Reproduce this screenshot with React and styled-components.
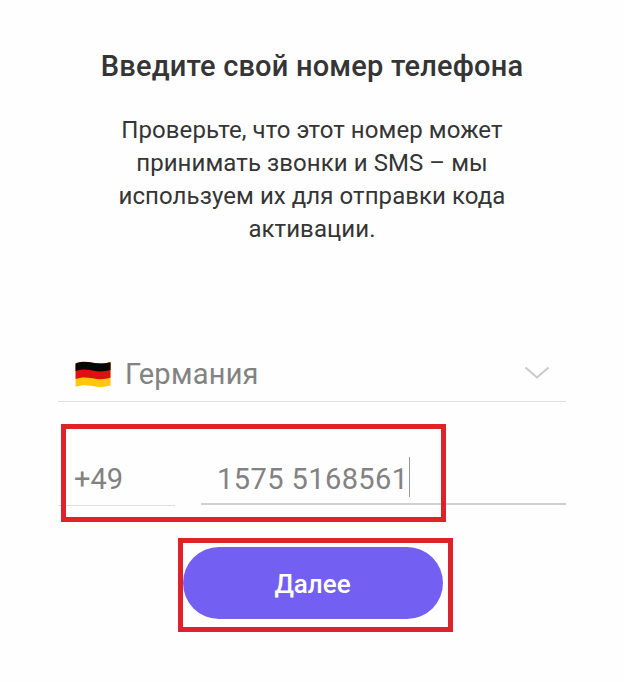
import React from 'react'
import styled, { createGlobalStyle } from 'styled-components'

const dark = '#353535'
const grey = '#828282'
const purple = '#7360f2'
const red = '#de222a'

const GlobalStyle = createGlobalStyle`
  * {
    box-sizing: border-box;
  }
  body {
    margin: 0;
    background: #fefefe;
    font-family: Roboto, sans-serif;
  }
`

const App = () => (
  <Page>
    <GlobalStyle />
    <Title>Введите свой номер телефона</Title>
    <Description>
      <Line>Проверьте, что этот номер может</Line>
      <Line>принимать звонки и SMS – мы</Line>
      <Line>используем их для отправки кода</Line>
      <Line>активации.</Line>
    </Description>
    <Form>
      <CountrySelect>
        <Flag />
        <CountryName>Германия</CountryName>
        <Chevron />
      </CountrySelect>
      <PhoneRow>
        <CodeField>+49</CodeField>
        <NumberField>
          <Digits>1575 5168561</Digits>
          <Caret />
        </NumberField>
        <PhoneHighlight />
      </PhoneRow>
    </Form>
    <ButtonWrap>
      <Button type="button">Далее</Button>
      <ButtonHighlight />
    </ButtonWrap>
  </Page>
)

const Flag = () => (
  <FlagSvg viewBox="0 0 36 26">
    <defs>
      <clipPath id="wave">
        <path d="M.6 1.9C6-.1 11-.1 17.500 1.300C24 2.600 29 2.300 35.500 .7V24C29 25.700 24 25.800 17.500 24.500C11 23.300 6 23.400.6 25.300Z" />
      </clipPath>
    </defs>
    <g clipPath="url(#wave)">
      <rect width="36" height="26" fill="#ffc90a" />
      <path d="M0-2H36V16.100C29 18.200 24 18.100 17.500 16.800C11 15.500 6 15.500 0 17.500Z" fill="#dc1212" />
      <path d="M0-2H36V8.300C29 10.400 24 10.300 17.500 9C11 7.700 6 7.700 0 9.700Z" fill="#090606" />
    </g>
  </FlagSvg>
)

const Chevron = () => (
  <ChevronSvg viewBox="0 0 26 14">
    <path d="M1.500 1.500L13 11.500L24.500 1.500" />
  </ChevronSvg>
)

export default App

const Page = styled.main`
  width: 624px;
  height: 682px;
  padding-top: 46px;
  overflow: hidden;
`

const Title = styled.h1`
  margin: 0;
  color: ${dark};
  font-size: 29px;
  font-weight: 500;
  line-height: 40px;
  letter-spacing: 0.19px;
  text-align: center;
  white-space: nowrap;
`

const Description = styled.p`
  margin: 28px 0 0;
  color: ${dark};
  font-size: 24px;
  line-height: 33px;
  letter-spacing: 0.07px;
  text-align: center;
`

const Line = styled.span`
  display: block;
  white-space: nowrap;
`

const Form = styled.div`
  width: 508px;
  margin: 99px 0 0 58px;
`

const CountrySelect = styled.div`
  display: flex;
  align-items: center;
  height: 57px;
  padding: 2px 16px 0 17px;
  border-bottom: 1px solid #dedede;
`

const FlagSvg = styled.svg`
  width: 36px;
  height: 27px;
`

const CountryName = styled.span`
  flex: 1;
  margin-left: 14px;
  color: ${grey};
  font-size: 29px;
  letter-spacing: 0.25px;
`

const ChevronSvg = styled.svg`
  width: 26px;
  height: 14px;
  margin-bottom: 3px;
  fill: none;
  stroke: #c9c9c9;
  stroke-width: 2;
`

const PhoneRow = styled.div`
  position: relative;
  display: flex;
  align-items: flex-start;
  justify-content: space-between;
  padding-top: 51px;
  color: ${grey};
  font-size: 29px;
  line-height: 52px;
`

const CodeField = styled.div`
  width: 117px;
  height: 53px;
  padding-left: 16px;
  border-bottom: 1px solid #dedede;
`

const NumberField = styled.div`
  display: flex;
  width: 365px;
  height: 52px;
  padding-left: 16px;
  border-bottom: 2px solid #d0d0d0;
`

const Digits = styled.span`
  letter-spacing: 0.42px;
  white-space: nowrap;
`

const Caret = styled.i`
  width: 1px;
  height: 40px;
  margin-top: 4px;
  background: #999;
`

const Highlight = styled.div`
  position: absolute;
  border: 5px solid ${red};
  pointer-events: none;
`

const PhoneHighlight = styled(Highlight)`
  top: 22px;
  left: 3px;
  width: 385px;
  height: 98px;
`

const ButtonWrap = styled.div`
  position: relative;
  width: 260px;
  margin: 41px 0 0 183px;
`

const Button = styled.button`
  display: block;
  width: 260px;
  height: 72px;
  padding: 2px 1px 0 0;
  border: 0;
  border-radius: 36px;
  background: ${purple};
  color: #fff;
  font-family: inherit;
  font-size: 26px;
  font-weight: 500;
`

const ButtonHighlight = styled(Highlight)`
  top: -9px;
  left: -5px;
  width: 275px;
  height: 94px;
`
